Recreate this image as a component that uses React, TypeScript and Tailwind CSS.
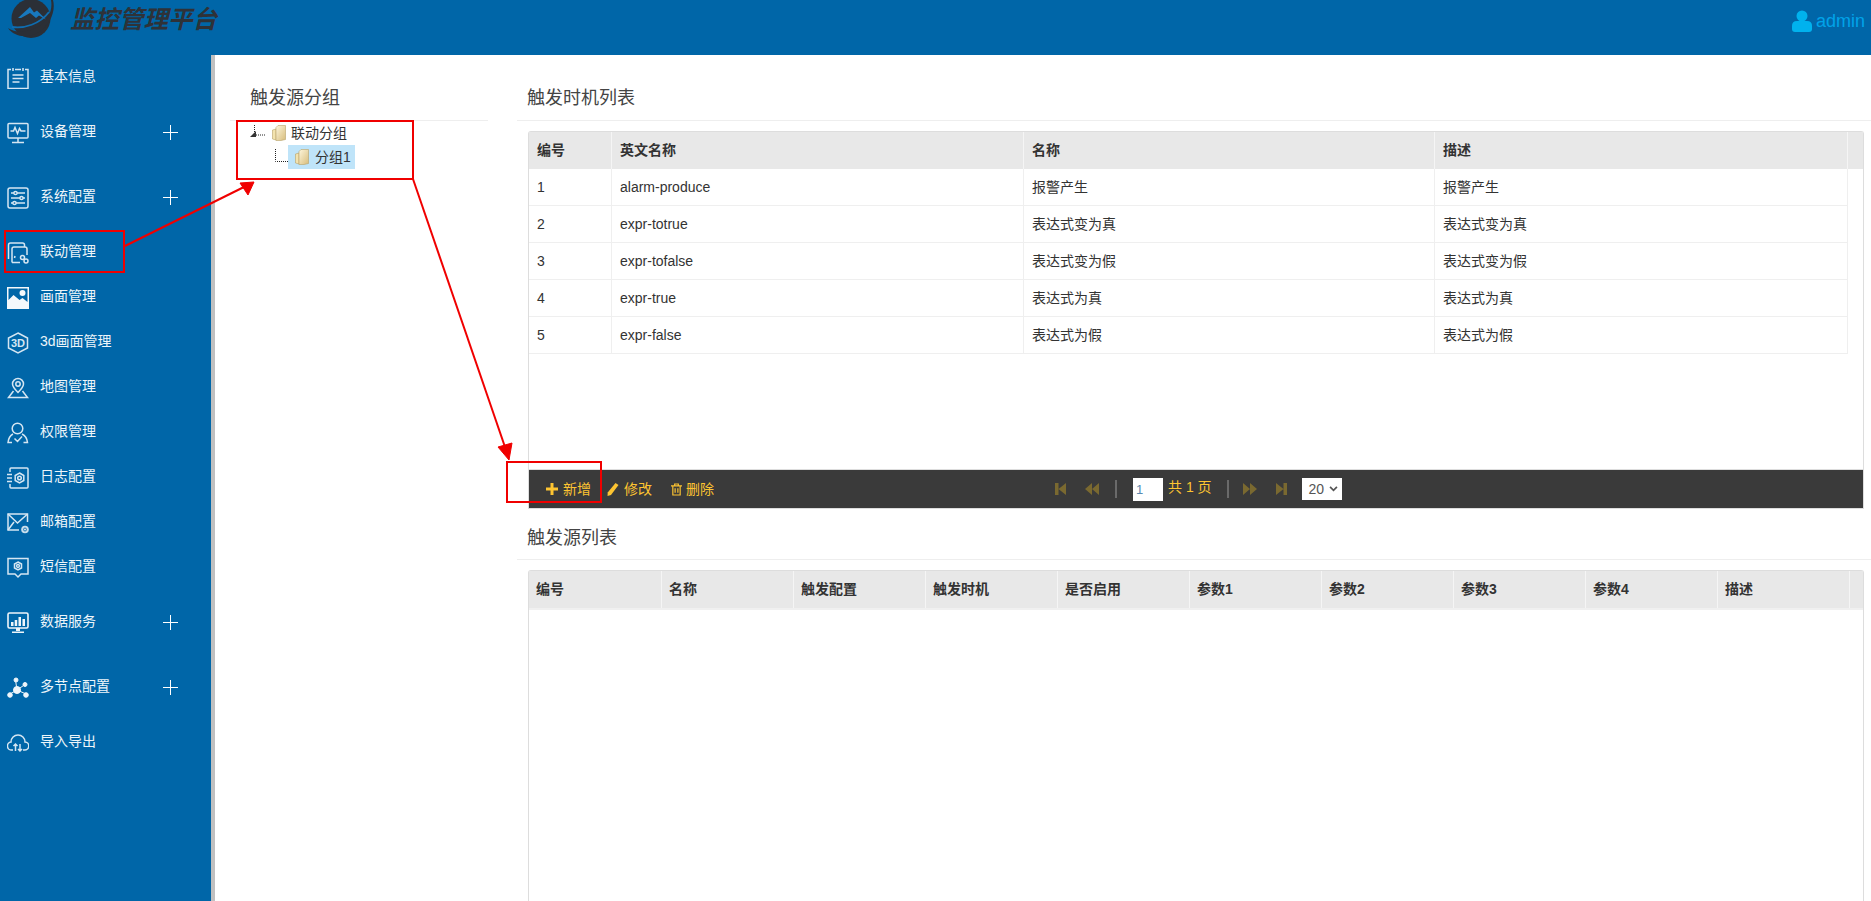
import { ReactNode } from 'react';

const FONT = 'font-["Liberation_Sans","Noto_Sans_CJK_SC",sans-serif]';

function Svg({ children }: { children: ReactNode }) {
  return (
    <svg viewBox="0 0 22 22" className="w-[22px] h-[22px] shrink-0" fill="none" stroke="#d5e6f2" strokeWidth="1.5">
      {children}
    </svg>
  );
}

const icons: Record<string, ReactNode> = {
  info: (
    <Svg>
      <path d="M4 2.500H1v19h20v-19h-3M8 2.500h6" />
      <path d="M6 1v3M16 1v3M5.500 8h11M5.500 11.500h11M5.500 15h7" />
    </Svg>
  ),
  device: (
    <Svg>
      <rect x="1" y="1.500" width="20" height="14.500" rx="1" />
      <path d="M3.500 9h3l1.500-3.500 2.500 6 2-5 1.500 2.500h4.500M11 16v4M5 20.500h12" />
    </Svg>
  ),
  system: (
    <Svg>
      <rect x="1" y="1" width="20" height="20" rx="2" />
      <path d="M4 6h3M10 6h8M4 11h9M16 11h2M4 16h2M9 16h9" />
      <circle cx="8.500" cy="6" r="1.600" />
      <circle cx="14.500" cy="11" r="1.600" />
      <circle cx="7.500" cy="16" r="1.600" />
    </Svg>
  ),
  link: (
    <Svg>
      <path d="M1.500 17V3q0-2 2-2h12q2 0 2 2v2" />
      <path d="M5 20.500V7q0-2 2-2h11q2 0 2 2v6M5 20.500h8M8 14l-.5 2" />
      <circle cx="15.500" cy="15.500" r="2" />
      <circle cx="19" cy="19" r="2" />
    </Svg>
  ),
  picture: (
    <svg viewBox="0 0 22 22" className="w-[22px] h-[22px] shrink-0">
      <path d="M0 0h22v22H0z" fill="#f4f8fb" />
      <path d="M1.500 13l5-5 6 5 3-2 5 4V1.500h-19z" fill="#0066a8" />
      <circle cx="15.500" cy="6" r="3" fill="#f4f8fb" />
    </svg>
  ),
  three: (
    <Svg>
      <path d="M11 1l9.500 5v10L11 21 1.500 16V6z" />
      <text x="11" y="14.800" textAnchor="middle" fontSize="11" fontWeight="700" fill="#d5e6f2" stroke="none" fontFamily="Liberation Sans">
        3D
      </text>
    </Svg>
  ),
  map: (
    <Svg>
      <path d="M11 15.500C7 11.500 5.500 9.500 5.500 7a5.500 5.500 0 0 1 11 0c0 2.500-1.500 4.500-5.500 8.500z" />
      <circle cx="11" cy="7" r="2.200" />
      <path d="M6.500 14L1.500 20.500h19L15.500 14" />
    </Svg>
  ),
  auth: (
    <Svg>
      <circle cx="10.500" cy="6.500" r="5.300" />
      <path d="M6 12c-3 1.500-4.500 4-5 8.500h4M15 12c3 1.500 5 4 5.500 8.500h-4M7.500 16.500l3 3 4.500-5" />
    </Svg>
  ),
  log: (
    <Svg>
      <path d="M3 5V2q0-1 1-1h16q1 0 1 1v18q0 1-1 1H4q-1 0-1-1v-3" />
      <path d="M0 7.500h5M0 11h5M0 14.500h5" />
      <circle cx="12.500" cy="11" r="1.800" />
      <path d="M12.500 6l4.300 2.500v5L12.500 16l-4.300-2.500v-5z" />
    </Svg>
  ),
  mail: (
    <Svg>
      <path d="M20.500 10V2H1v16h11" />
      <path d="M1 2l9.500 9L20.500 2M1 18l6-8" />
      <circle cx="18" cy="17.500" r="3.800" fill="#c9deec" stroke="none" />
      <circle cx="18" cy="17.500" r="1.500" stroke="#0066a8" strokeWidth="0.800" />
    </Svg>
  ),
  sms: (
    <Svg>
      <path d="M1 1.500h20v15.500h-7L11 20l-3-3H1z" />
      <circle cx="11" cy="9" r="1.400" />
      <path d="M11 5l3.500 2v4L11 13l-3.500-2V7z" />
    </Svg>
  ),
  data: (
    <svg viewBox="0 0 22 22" className="w-[22px] h-[22px] shrink-0">
      <rect x="1" y="1" width="20" height="15" rx="1.500" fill="none" stroke="#eef5fa" strokeWidth="1.600" />
      <path d="M4 10h2.500v4H4zM7.700 8h2.500v6H7.700zM11.500 5H14v9h-2.500zM15.500 7H18v7h-2.500zM9 16h4v3H9zM5 19.500h12V21H5z" fill="#eef5fa" />
    </svg>
  ),
  node: (
    <svg viewBox="0 0 22 22" className="w-[22px] h-[22px] shrink-0" fill="#eef5fa" stroke="#eef5fa" strokeWidth="1">
      <path d="M10 13L8.500 3M10 13l8-5.500M10 13l-7 4M10 13l9 4" />
      <circle cx="10" cy="13" r="3.500" />
      <circle cx="9" cy="3" r="2" />
      <circle cx="18" cy="7.500" r="2" />
      <circle cx="3" cy="18" r="2.300" />
      <circle cx="19" cy="18" r="2.300" />
    </svg>
  ),
  cloud: (
    <Svg>
      <path d="M6 18H5a4 4 0 0 1-1-8 7 7 0 0 1 14 0 4 4 0 0 1-.5 8H16" />
      <path d="M8.500 19v-7M6.500 14l2-2 2 2M13 12v7M11 17l2 2 2-2" />
    </Svg>
  ),
};

const menu = [
  { label: '基本信息', icon: 'info' },
  { label: '设备管理', icon: 'device', more: true },
  { label: '系统配置', icon: 'system', more: true },
  { label: '联动管理', icon: 'link' },
  { label: '画面管理', icon: 'picture' },
  { label: '3d画面管理', icon: 'three' },
  { label: '地图管理', icon: 'map' },
  { label: '权限管理', icon: 'auth' },
  { label: '日志配置', icon: 'log' },
  { label: '邮箱配置', icon: 'mail' },
  { label: '短信配置', icon: 'sms' },
  { label: '数据服务', icon: 'data', more: true },
  { label: '多节点配置', icon: 'node', more: true },
  { label: '导入导出', icon: 'cloud' },
];

const triggers = [
  ['1', 'alarm-produce', '报警产生', '报警产生'],
  ['2', 'expr-totrue', '表达式变为真', '表达式变为真'],
  ['3', 'expr-tofalse', '表达式变为假', '表达式变为假'],
  ['4', 'expr-true', '表达式为真', '表达式为真'],
  ['5', 'expr-false', '表达式为假', '表达式为假'],
];

const sourceCols = ['编号', '名称', '触发配置', '触发时机', '是否启用', '参数1', '参数2', '参数3', '参数4', '描述'];

function Folder() {
  return (
    <svg viewBox="0 0 14 16" className="w-[14px] h-[16px] shrink-0">
      <defs>
        <linearGradient id="fold" x1="0" y1="0" x2="1" y2="1">
          <stop offset="0" stopColor="#fdf6dc" />
          <stop offset="1" stopColor="#d8bd7c" />
        </linearGradient>
      </defs>
      <path d="M.5 14V5l3.500-1v11z" fill="#f3e3ae" stroke="#b9a26a" strokeWidth="0.6" />
      <path d="M4 2.500L6 .5h7.500v14L9 15.500H4z" fill="url(#fold)" stroke="#b9a26a" strokeWidth="0.6" />
    </svg>
  );
}

function SectionTitle({ text, height, pad }: { text: string; height: string; pad: string }) {
  return (
    <div className={`${height} ${pad} border-b border-[#eeeeee] text-[18px] leading-[26px] text-[#444444]`}>
      {text}
    </div>
  );
}

function Pager({ kind }: { kind: 'first' | 'prev' | 'next' | 'last' }) {
  const d = {
    first: 'M0 1h3.500v12H0zM11 1v12L3.500 7z',
    prev: 'M7 1v12L0 7zM14 1v12L7 7z',
    next: 'M0 1v12l7-6zM7 1v12l7-6z',
    last: 'M0 1v12l7.500-6zM7.500 1H11v12H7.500z',
  }[kind];
  return (
    <svg viewBox="0 0 14 14" className="w-[14px] h-[14px] shrink-0">
      <path d={d} fill="#7a6930" />
    </svg>
  );
}

function App() {
  return (
    <div className={`relative h-screen w-full overflow-hidden bg-white text-[14px] text-[#333333] ${FONT}`}>
      {/* Header */}
      <header className="h-[55px] bg-[#0066a8] flex items-start justify-between overflow-hidden">
        <div className="flex items-start pl-[7px]">
          <svg viewBox="0 0 48 40" className="w-[48px] h-[40px] shrink-0">
            <circle cx="24" cy="18.500" r="19.500" fill="#2b2f36" />
            <path d="M1 28c6 9 20 11 31 4C43 25 49 11 46 0h-2c2 10-3 21-13 27C20 33 8 33 1 28z" fill="#2b2f36" />
            <path d="M5 27c12 2 28-3 37-15" fill="none" stroke="#0f6db0" strokeWidth="1.800" />
            <path d="M11 18L23 7l4 5.500 3-2 9 9-7-4-3 2.500-6-5-9 5z" fill="#1878bd" />
          </svg>
          <div className="ml-[15px] mt-[5px] text-[24.500px] leading-[30px] font-bold italic text-[#2e3238]">监控管理平台</div>
        </div>
        <div className="flex items-center mt-[10px] pr-[6px] text-[18px] leading-[22px] text-[#00a3e8]">
          <svg viewBox="0 0 20 22" className="w-[20px] h-[22px] mr-[4px]">
            <circle cx="10" cy="6" r="5.500" fill="#00b2ee" />
            <path d="M0 19v-3q0-5 5-5h10q5 0 5 5v3q0 3-3 3H3q-3 0-3-3z" fill="#00b2ee" />
          </svg>
          admin
        </div>
      </header>

      <div className="flex h-[846px]">
        {/* Sidebar */}
        <aside className="w-[215px] shrink-0 bg-[#0066a8] border-r-4 border-[#c0c0c0] text-[#edf5fa]">
          {menu.map(item => (
            <div key={item.label} className={`flex items-center pl-[7px] ${item.more ? 'h-[65px]' : 'h-[45px]'}`}>
              {icons[item.icon]}
              <span className="ml-[11px] -mt-[2px] whitespace-nowrap">{item.label}</span>
              {item.more && (
                <svg viewBox="0 0 15 15" className="w-[15px] h-[15px] absolute left-[163px]">
                  <path d="M0 7.500h15M7.500 0v15" stroke="#ffffff" strokeWidth="1" />
                </svg>
              )}
            </div>
          ))}
        </aside>

        {/* Tree */}
        <section className="w-[258px] shrink-0 ml-[15px]">
          <SectionTitle text="触发源分组" height="h-[66px]" pad="pt-[30px] pl-[20px]" />
          <div className="pl-[20px]">
            <div className="flex items-center h-[24px]">
              <svg viewBox="0 0 22 16" className="w-[22px] h-[16px] shrink-0">
                <path d="M4.500 0v9M6 10h10" stroke="#222222" strokeWidth="1" strokeDasharray="1 1" />
                <path d="M0 12h6V6z" fill="#333333" />
              </svg>
              <Folder />
              <span className="ml-[5px]">联动分组</span>
            </div>
            <div className="flex items-center h-[24px] pl-[25px]">
              <svg viewBox="0 0 13 14" className="w-[13px] h-[14px] shrink-0 -mt-[2px]">
                <path d="M.500 0v12.500H13" stroke="#222222" strokeWidth="1" strokeDasharray="1 1" fill="none" />
              </svg>
              <div className="flex items-center h-[24px] w-[67px] pl-[7px] bg-[#bfe4f9]">
                <Folder />
                <span className="ml-[6px]">分组1</span>
              </div>
            </div>
          </div>
        </section>

        {/* Right column */}
        <main className="flex-1 min-w-0 ml-[29px] flex flex-col">
          <SectionTitle text="触发时机列表" height="h-[66px]" pad="pt-[30px] pl-[10px]" />

          <div className="ml-[11px] mr-[7px] mt-[10px] h-[378px] shrink-0 flex flex-col border-t border-l border-r border-[#dddddd] rounded-t-[3px]">
            <div className="grid grid-cols-[83px_412px_411px_413px_1fr] bg-[#e8e8e8] h-[37px] font-bold shrink-0">
              {['编号', '英文名称', '名称', '描述', ''].map((h, i) => (
                <div key={i} className="flex items-center pl-[8px] border-r border-[#f5f5f5] last:border-r-0">{h}</div>
              ))}
            </div>
            <div className="flex-1 w-[1319px]">
              {triggers.map(row => (
                <div key={row[0]} className="grid grid-cols-[83px_412px_411px_413px] h-[37px] border-b border-[#efefef]">
                  {row.map((c, i) => (
                    <div key={i} className="flex items-center pl-[8px] border-r border-[#efefef]">{c}</div>
                  ))}
                </div>
              ))}
            </div>
            {/* Toolbar */}
            <div className="h-[40px] shrink-0 bg-[#3a3a3a] border-y border-[#dddddd] flex items-center text-[#fdc431] relative">
              <div className="flex items-center ml-[17px]">
                <svg viewBox="0 0 12 12" className="w-[12px] h-[12px] mr-[5px]"><path d="M4.500 0h3v4.500H12v3H7.500V12h-3V7.500H0v-3h4.500z" fill="#fdc431" /></svg>
                新增
              </div>
              <div className="flex items-center ml-[16px]">
                <svg viewBox="0 0 12 14" className="w-[12px] h-[14px] mr-[5px]"><path d="M8.500 1l3 2L4 13l-3.500 1 .2-3.500z" fill="#fdc431" /></svg>
                修改
              </div>
              <div className="flex items-center ml-[19px]">
                <svg viewBox="0 0 12 14" className="w-[11px] h-[13px] mr-[4px]" fill="none" stroke="#fdc431" strokeWidth="1.300"><path d="M0 3h12M4 3V1h4v2M2 3v10h8V3M4.500 5.500v5M7.500 5.500v5" /></svg>
                删除
              </div>
              <div className="absolute left-[526px] top-0 h-full flex items-center">
                <Pager kind="first" />
                <span className="w-[16px]" />
                <Pager kind="prev" />
                <span className="w-[2px] h-[18px] bg-[#6a6a6a] ml-[16px] mr-[16px]" />
                <input readOnly value="1" className="w-[30px] h-[23px] bg-white text-[#5a8ab0] pl-[3px] text-[13px] outline-none" />
                <span className="ml-[5px] mb-[3px] whitespace-nowrap">共 1 页</span>
                <span className="w-[2px] h-[18px] bg-[#6a6a6a] ml-[15px] mr-[14px]" />
                <Pager kind="next" />
                <span className="w-[19px]" />
                <Pager kind="last" />
                <div className="ml-[12px] w-[40px] h-[22px] pl-[7px] bg-white text-[#555555] text-[14px] flex items-center gap-[5px]">
                  20
                  <svg viewBox="0 0 10 7" className="w-[9px] h-[6px]"><path d="M1 1l4 4 4-4" fill="none" stroke="#555555" strokeWidth="2" /></svg>
                </div>
              </div>
            </div>
          </div>

          <SectionTitle text="触发源列表" height="h-[51px]" pad="pt-[16px] pl-[10px]" />

          <div className="ml-[11px] mr-[7px] mt-[10px] flex-1 border-t border-l border-r border-[#dddddd] rounded-t-[3px]">
            <div className="grid grid-cols-[133px_repeat(9,132px)_1fr] bg-[#e8e8e8] h-[37px] font-bold border-b-2 border-[#f0f0f0] box-content">
              {sourceCols.map(h => (
                <div key={h} className="flex items-center pl-[7px] border-r border-[#f5f5f5]">{h}</div>
              ))}
              <div />
            </div>
          </div>
        </main>
      </div>

      {/* Red annotations drawn over the page */}
      <div className="absolute left-[4px] top-[230px] w-[121px] h-[43px] border-2 border-[#f00000]" />
      <div className="absolute left-[236px] top-[120px] w-[178px] h-[60px] border-2 border-[#f00000]" />
      <div className="absolute left-[506px] top-[461px] w-[96px] h-[42px] border-2 border-[#f00000]" />
      <svg className="absolute left-0 top-0 w-[1871px] h-[901px] pointer-events-none" viewBox="0 0 1871 901">
        <path d="M125 246L246 186" stroke="#f00000" strokeWidth="2" />
        <path d="M254 182L240 183L248 195z" fill="#f00000" stroke="#f00000" />
        <path d="M413 179L505 447" stroke="#f00000" strokeWidth="2" />
        <path d="M509 460L498 447L512 443z" fill="#f00000" stroke="#f00000" />
      </svg>
    </div>
  );
}

export default App;
